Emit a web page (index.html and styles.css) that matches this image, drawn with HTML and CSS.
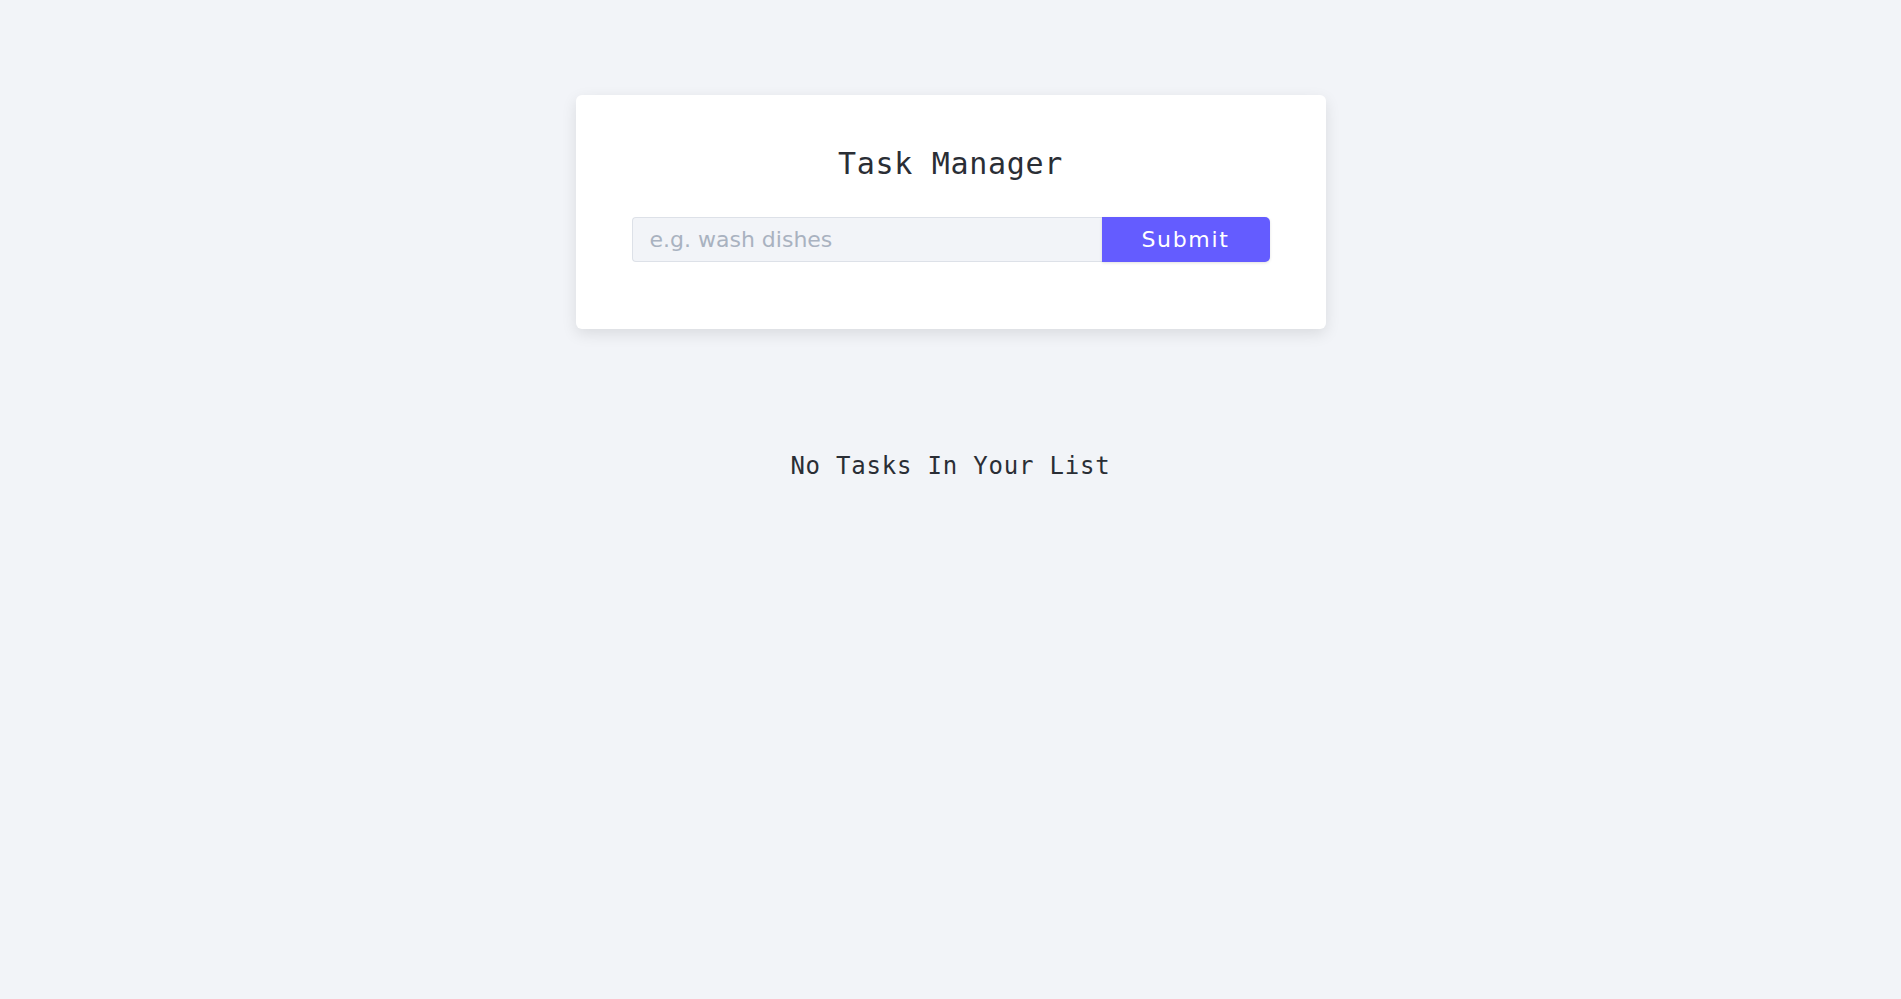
FILE: index.html
```html
<!DOCTYPE html>
<html lang="en">
<head>
<meta charset="utf-8">
<title>Task Manager</title>
<link rel="stylesheet" href="styles.css">
</head>
<body>
<main class="page">
  <section class="card">
    <h3 class="card-title">Task Manager</h3>
    <form class="task-form">
      <input class="task-input" type="text" placeholder="e.g. wash dishes">
      <button class="submit-btn" type="submit">Submit</button>
    </form>
  </section>
  <p class="empty">No Tasks In Your List</p>
</main>
</body>
</html>
```

FILE: styles.css
```css
* {
  box-sizing: border-box;
  margin: 0;
  padding: 0;
}

html, body {
  background: #f2f4f8;
}

body {
  color: #102a42;
  font-family: "DejaVu Sans Mono", "Liberation Mono", monospace;
}

.page {
  display: flex;
  flex-direction: column;
  align-items: center;
  padding-top: 95px;
}

.card {
  width: 750px;
  background: #ffffff;
  border-radius: 6px;
  box-shadow: 0 5px 15px rgba(0, 0, 0, 0.1);
  padding: 51px 56px 67px;
}

.card-title {
  font-weight: 400;
  font-size: 30px;
  line-height: 36px;
  letter-spacing: 0.7px;
  text-align: center;
  color: #2a2e35;
  margin-bottom: 35px;
}

.task-form {
  display: flex;
  height: 45px;
}

.task-input {
  flex: 1 1 auto;
  min-width: 0;
  height: 45px;
  background: #f2f4f8;
  border: 1px solid #dde1e8;
  border-right: none;
  border-radius: 4px 0 0 4px;
  padding: 0 17px;
  font-family: "DejaVu Sans", sans-serif;
  font-size: 22px;
  color: #102a42;
  outline: none;
}

.task-input::placeholder {
  color: #a9b2c0;
}

.submit-btn {
  flex: 0 0 168px;
  height: 45px;
  background: #645cff;
  border: none;
  border-radius: 0 5px 5px 0;
  color: #ffffff;
  font-family: "DejaVu Sans", sans-serif;
  font-size: 22px;
  letter-spacing: 1.7px;
  box-shadow: 0 1px 3px rgba(0, 0, 0, 0.12);
  cursor: pointer;
}

.empty {
  margin-top: 123px;
  font-size: 24px;
  line-height: 28px;
  letter-spacing: 0.8px;
  color: #2a2e35;
  text-align: center;
}
```
